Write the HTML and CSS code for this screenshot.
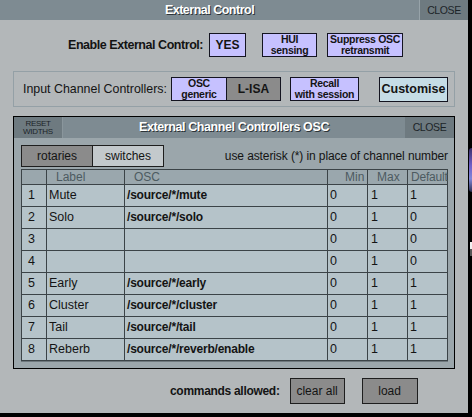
FILE: index.html
```html
<!DOCTYPE html>
<html>
<head>
<meta charset="utf-8">
<link rel="stylesheet" href="styles.css">
</head>
<body>
<div class="bgwin bgwin-purple"></div>
<div class="bgwin bgwin-white"></div>
<div class="panel">
  <div class="titlebar">
    <div class="title">External Control</div>
    <div class="close">CLOSE</div>
  </div>

  <div class="row1">
    <span class="lbl-bold">Enable External Control:</span>
    <div class="btn lav b-yes"><span>YES</span></div>
    <div class="btn lav small b-hui"><span>HUI<br>sensing</span></div>
    <div class="btn lav small b-sup"><span>Suppress OSC<br>retransmit</span></div>
  </div>

  <div class="row2">
    <span class="lbl">Input Channel Controllers:</span>
    <div class="btn lav small b-osc"><span>OSC<br>generic</span></div>
    <div class="btn grey b-lisa"><span>L-ISA</span></div>
    <div class="btn lav small b-recall"><span>Recall<br>with session</span></div>
    <div class="btn blue b-cust"><span>Customise</span></div>
  </div>

  <div class="inner">
    <div class="ititle">
      <div class="reset">RESET<br>WIDTHS</div>
      <div class="ititle-text">External Channel Controllers OSC</div>
      <div class="iclose">CLOSE</div>
    </div>
    <div class="tabs">
      <div class="tab tab-on">rotaries</div>
      <div class="tab tab-off">switches</div>
      <div class="hint">use asterisk (*) in place of channel number</div>
    </div>
    <div class="grid">
      <div class="h"></div><div class="h h-label">Label</div><div class="h h-osc">OSC</div><div class="h h-min">Min</div><div class="h h-max">Max</div><div class="h h-def">Default</div>

      <div class="c n">1</div><div class="c l">Mute</div><div class="c o">/source/*/mute</div><div class="c v">0</div><div class="c v mx">1</div><div class="c v">1</div>
      <div class="c n">2</div><div class="c l">Solo</div><div class="c o">/source/*/solo</div><div class="c v">0</div><div class="c v mx">1</div><div class="c v">0</div>
      <div class="c n">3</div><div class="c l"></div><div class="c o"></div><div class="c v">0</div><div class="c v mx">1</div><div class="c v">0</div>
      <div class="c n">4</div><div class="c l"></div><div class="c o"></div><div class="c v">0</div><div class="c v mx">1</div><div class="c v">0</div>
      <div class="c n">5</div><div class="c l">Early</div><div class="c o">/source/*/early</div><div class="c v">0</div><div class="c v mx">1</div><div class="c v">1</div>
      <div class="c n">6</div><div class="c l">Cluster</div><div class="c o">/source/*/cluster</div><div class="c v">0</div><div class="c v mx">1</div><div class="c v">1</div>
      <div class="c n">7</div><div class="c l">Tail</div><div class="c o">/source/*/tail</div><div class="c v">0</div><div class="c v mx">1</div><div class="c v">1</div>
      <div class="c n">8</div><div class="c l">Reberb</div><div class="c o">/source/*/reverb/enable</div><div class="c v">0</div><div class="c v mx">1</div><div class="c v">1</div>
    </div>
  </div>

  <div class="bottom">
    <span class="lbl-bold small-b">commands allowed:</span>
    <div class="btn grey2 b-clear"><span>clear all</span></div>
    <div class="btn grey2 b-load"><span>load</span></div>
  </div>
</div>
</body>
</html>
```

FILE: styles.css
```css
* { box-sizing: border-box; }
html, body { margin: 0; padding: 0; }
body {
  width: 472px;
  height: 417px;
  background: #000;
  position: relative;
  overflow: hidden;
  font-family: "Liberation Sans", Arial, sans-serif;
  color: #141414;
}
.bgwin { position: absolute; }
.bgwin-purple {
  left: 469px; top: 148px; width: 3px; height: 44px;
  background: linear-gradient(#3a2f6a, #6f5fc8 40%, #7f86d8 70%, #2a2e50);
  border-radius: 3px 0 0 3px;
}
.bgwin-white {
  left: 470px; top: 242px; width: 2px; height: 14px;
  background: linear-gradient(#f0f0f0 50%, #555 50%);
}
.panel {
  width: 468px;
  height: 413px;
  background: #b3b7b9;
  display: flex;
  flex-direction: column;
}
.titlebar {
  height: 20px;
  display: flex;
  background: #7e8b92;
}
.title {
  flex: 1;
  text-align: center;
  line-height: 20px;
  color: #fff;
  font-weight: bold;
  font-size: 12.5px;
  letter-spacing: -0.5px;
  text-shadow: 1px 1px 0 #2c3438;
}
.close {
  width: 49px;
  border-left: 1px solid #97a3a9;
  background: #6e7a80;
  text-align: center;
  font-size: 10.5px;
  line-height: 21px;
  color: #1c2428;
  letter-spacing: -0.4px;
}

.btn {
  display: flex;
  align-items: center;
  justify-content: center;
  text-align: center;
  border: 1px solid #141420;
  height: 24px;
  font-size: 12px;
  font-weight: bold;
  color: #141414;
}
.btn.small { font-size: 10.5px; line-height: 11px; letter-spacing: -0.3px; white-space: nowrap; }
.lav { background: #c6c1ff; }
.grey { background: #8b8b8b; }
.grey2 { background: #8b8b8b; font-weight: normal; height: 26px; border-color: #1e1e1e; }
.blue { background: #c6dde6; font-size: 12.5px; }

.row1 {
  margin-top: 13px;
  height: 24px;
  display: flex;
  align-items: center;
  padding-left: 68px;
}
.lbl-bold {
  font-weight: bold;
  font-size: 12.5px;
  letter-spacing: -0.45px;
}
.b-yes { width: 37px; margin-left: 6px; }
.b-hui { width: 55px; margin-left: 16px; }
.b-sup { width: 76px; margin-left: 10px; }

.row2 {
  margin: 14px 0 0 13px;
  width: 442px;
  height: 36px;
  border: 1px solid #94a0a6;
  display: flex;
  align-items: center;
  padding-left: 9px;
}
.lbl { font-size: 12.4px; }
.b-osc { width: 56px; margin-left: 4px; }
.b-lisa { width: 54px; border-left: none; }
.b-recall { width: 69px; margin-left: 9px; }
.b-cust { width: 69px; margin-left: 20px; height: 25px; }

.inner {
  margin: 9px 0 0 13px;
  width: 442px;
  height: 253px;
  border: 1px solid #000;
  background: #9ba6ab;
  display: flex;
  flex-direction: column;
}
.ititle {
  height: 21px;
  display: flex;
  background: #7e8b92;
}
.reset {
  width: 49px;
  background: #6e7a80;
  border-right: 1px solid #8a969c;
  font-size: 8px;
  line-height: 8px;
  text-align: center;
  color: #1c2428;
  padding-top: 3px;
  letter-spacing: -0.3px;
}
.ititle-text {
  flex: 1;
  text-align: center;
  line-height: 21px;
  color: #fff;
  font-weight: bold;
  font-size: 12.5px;
  letter-spacing: -0.4px;
  text-shadow: 1px 1px 0 #2c3438;
}
.iclose {
  width: 49px;
  background: #6e7a80;
  text-align: center;
  font-size: 10.5px;
  line-height: 21px;
  color: #1c2428;
  letter-spacing: -0.4px;
}
.tabs {
  margin-top: 7px;
  height: 22px;
  display: flex;
  align-items: center;
  padding-left: 7px;
}
.tab {
  height: 22px;
  border: 1px solid #1e1e1e;
  font-size: 12px;
  line-height: 20px;
  text-align: center;
}
.tab-on { width: 72px; background: #8b8b8b; }
.tab-off { width: 71px; background: #c3c9cc; border-left: none; }
.hint {
  margin-left: auto;
  margin-right: 6px;
  font-size: 12px;
  letter-spacing: -0.1px;
}
.grid {
  margin: 2px 0 0 7px;
  width: 427px;
  display: grid;
  grid-template-columns: 24px 77px 202px 39px 39px 39px;
  grid-template-rows: 14px repeat(8, 21px);
  gap: 1px;
  border: 1px solid #3b4347;
  background: #3b4347;
  box-shadow: 0 1px 0 #6e787d;
}
.h {
  background: #9aa7ad;
  color: #4d5b61;
  font-size: 12px;
  line-height: 14px;
  white-space: nowrap;
}
.h-label, .h-osc, .h-max { padding-left: 9px; }
.h-min { padding-left: 17px; }
.h-def { padding-left: 3px; letter-spacing: -0.2px; }
.c {
  background: #b5c3c9;
  font-size: 12.5px;
  line-height: 21px;
  padding-left: 2px;
  white-space: nowrap;
}
.c.n { padding-left: 6px; }
.c.mx { padding-left: 3px; }
.c.o { font-weight: bold; font-size: 12px; letter-spacing: -0.2px; }

.bottom {
  margin-top: 9px;
  display: flex;
  align-items: center;
  padding-left: 170px;
}
.small-b { font-size: 12px; letter-spacing: -0.3px; }
.b-clear { width: 55px; margin-left: 10px; font-size: 12px; }
.b-load { width: 56px; margin-left: 17px; font-size: 12px; }
```
